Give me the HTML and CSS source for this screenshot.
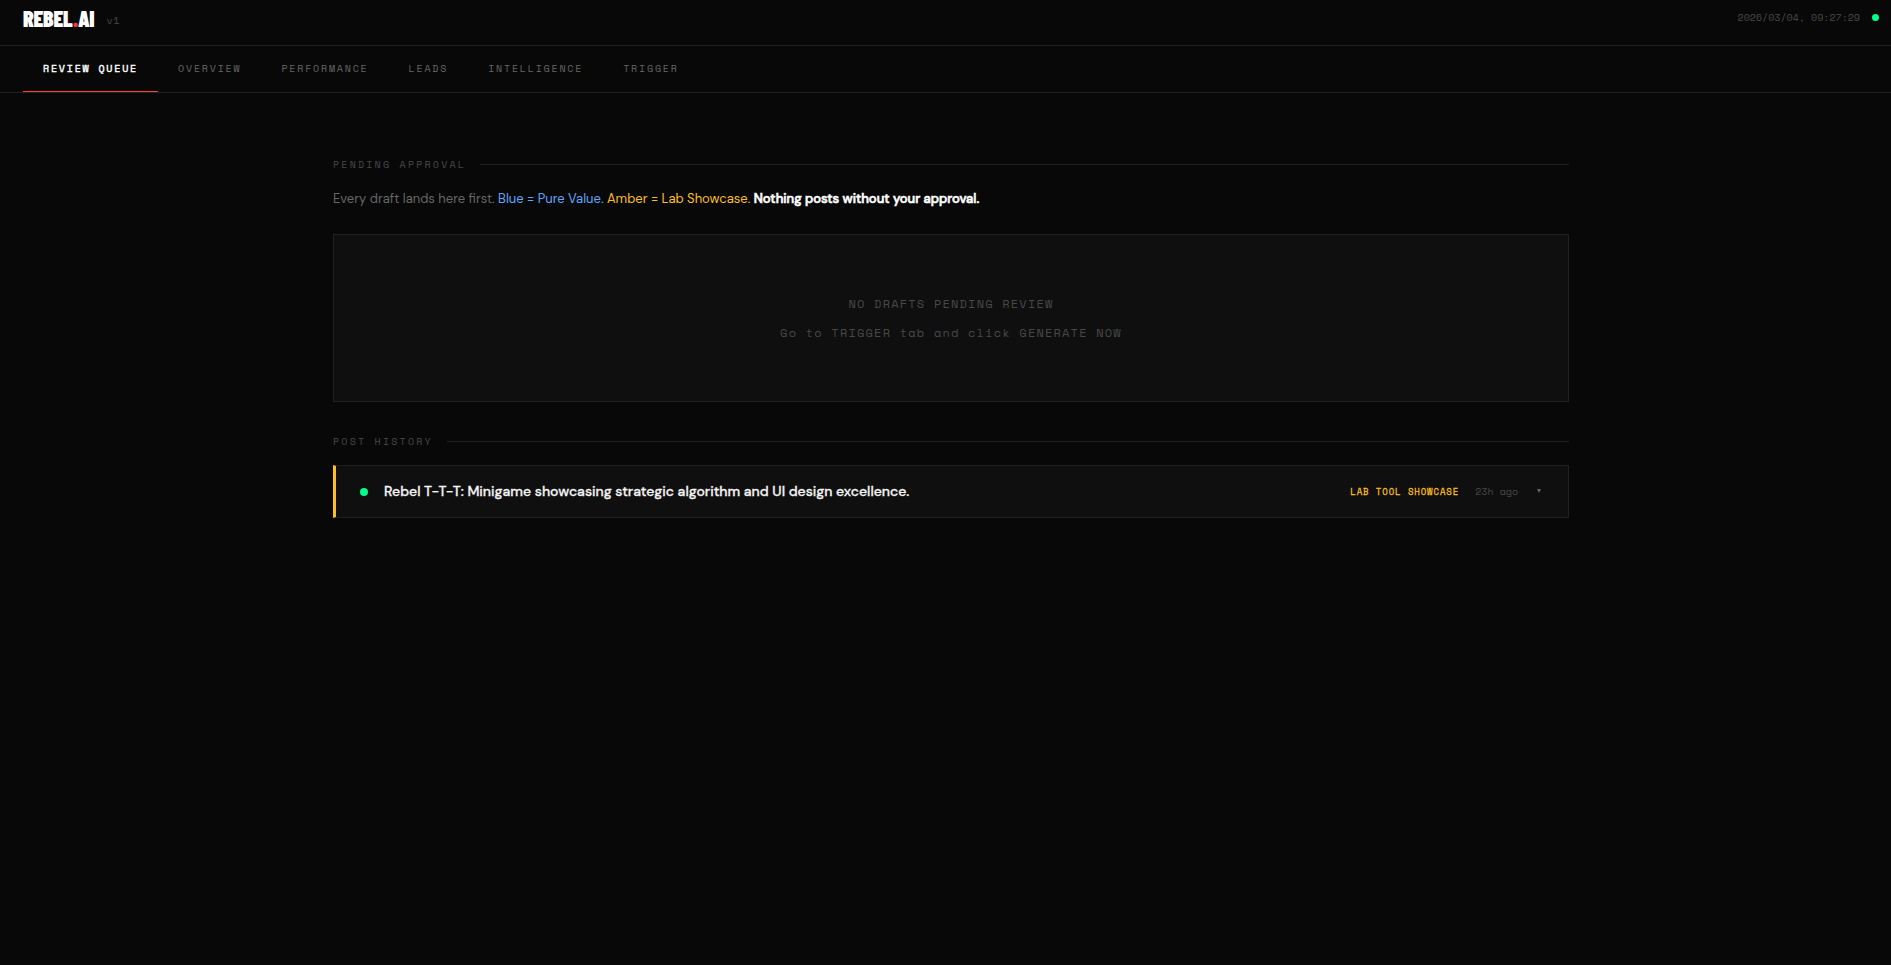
FILE: index.html
```html
<!DOCTYPE html>
<html lang="en">
<head>
  <meta charset="UTF-8" />
  <meta name="viewport" content="width=device-width, initial-scale=1.0" />
  <title>REBEL.AI</title>
  <link rel="stylesheet" href="styles.css">
</head>
<body>

  <header class="topbar">
    <div class="brand">
      <span class="logo">REBEL<span class="logo-dot">.</span>AI</span>
      <span class="version">v1</span>
    </div>
    <div class="status">
      <span class="clock">2026/03/04, 09:27:29</span>
      <span class="live-dot"></span>
    </div>
  </header>

  <nav class="tabs">
    <button class="tab active">REVIEW QUEUE</button>
    <button class="tab">OVERVIEW</button>
    <button class="tab">PERFORMANCE</button>
    <button class="tab">LEADS</button>
    <button class="tab">INTELLIGENCE</button>
    <button class="tab">TRIGGER</button>
  </nav>

  <div class="page">
    <main class="content">
      <h2 class="section-label">PENDING APPROVAL</h2>
      <p class="intro">Every draft lands here first. <span class="blue">Blue = Pure Value.</span> <span class="amber">Amber = Lab Showcase.</span> <strong>Nothing posts without your approval.</strong></p>

      <div class="empty">
        NO DRAFTS PENDING REVIEW<br>
        Go to TRIGGER tab and click GENERATE NOW
      </div>

      <h2 class="section-label">POST HISTORY</h2>
      <button class="post">
        <span class="post-dot"></span>
        <span class="post-title">Rebel T-T-T: Minigame showcasing strategic algorithm and UI design excellence.</span>
        <span class="post-tag">LAB TOOL SHOWCASE</span>
        <span class="post-age">23h ago</span>
        <svg class="post-arrow" viewBox="0 0 10 6" aria-hidden="true"><path d="M3 0h4L5 4z" /></svg>
      </button>
    </main>
  </div>

</body>
</html>
```
FILE: styles.css
```css
:root {
  --bg: #080808;
  --surface: #0f0f0f;
  --border: #202020;
  --text: #f5f5f5;
  --muted: #666;
  --dim: #484848;
  --red: #ff3b3b;
  --green: #00ff88;
  --amber: #fbbf24;
  --blue: #60a5fa;
  --mono: 'Space Mono', 'DejaVu Sans Mono', monospace;
  --sans: 'DM Sans', 'Inter', sans-serif;
}

* {
  box-sizing: border-box;
}

body {
  margin: 0;
  background: var(--bg);
  color: var(--text);
  font-family: var(--sans);
}

button {
  background: none;
  border: none;
  color: inherit;
  cursor: pointer;
}

/* header */
.topbar {
  display: flex;
  justify-content: space-between;
  align-items: flex-start;
  height: 46px;
  padding: 7px 12px 0 23px;
  border-bottom: 1px solid var(--border);
}

.brand {
  display: flex;
  align-items: center;
  gap: 12px;
}

.logo {
  padding-bottom: 2px;
  font-family: 'Barlow Condensed', 'Liberation Sans', sans-serif;
  font-size: 22px;
  font-weight: 900;
  line-height: 22px;
  letter-spacing: -0.01em;
  color: #fff;
}

.logo-dot {
  color: var(--red);
}

.version,
.clock {
  font-family: var(--mono);
  font-size: 10px;
  line-height: 21px;
  color: var(--dim);
}

.version {
  padding-top: 2px;
  letter-spacing: 0.1em;
}

.status {
  display: flex;
  align-items: center;
  gap: 12px;
}

.live-dot {
  width: 7px;
  height: 7px;
  border-radius: 50%;
  background: var(--green);
}

/* tabs */
.tabs {
  display: flex;
  padding: 0 23px;
  border-bottom: 1px solid var(--border);
}

.tab {
  height: 46px;
  padding: 0 20px;
  border-bottom: 1px solid transparent;
  font-family: var(--mono);
  font-size: 10px;
  letter-spacing: 0.18em;
  color: var(--muted);
}

.tab.active {
  color: #fff;
  -webkit-text-stroke: 0.04em;
  border-bottom-color: var(--red);
}

/* content */
.page {
  padding: 64px 0 64px 11px;
}

.content {
  max-width: 1236px;
  margin: 0 auto;
}

.section-label {
  display: flex;
  align-items: center;
  gap: 14px;
  margin: 0;
  font-family: var(--mono);
  font-size: 10px;
  font-weight: 400;
  line-height: 15px;
  letter-spacing: 0.22em;
  color: var(--dim);
}

.section-label::after {
  content: '';
  flex: 1;
  height: 1px;
  background: var(--border);
}

.intro {
  margin: 16px 0 24px;
  font-size: 13px;
  line-height: 22px;
  color: var(--muted);
}

.intro strong {
  color: #fff;
  font-weight: 500;
  -webkit-text-stroke: 0.05em;
}

.blue {
  color: var(--blue);
}

.amber {
  color: var(--amber);
}

.empty {
  margin-bottom: 32px;
  padding: 54px 24px;
  border: 1px solid var(--border);
  background: var(--surface);
  font-family: var(--mono);
  font-size: 12px;
  line-height: 29px;
  letter-spacing: 0.1em;
  text-align: center;
  color: var(--dim);
}

.post {
  display: flex;
  align-items: center;
  gap: 16px;
  width: 100%;
  margin-top: 16px;
  padding: 15px 24px;
  border: 1px solid var(--border);
  border-left: 3px solid var(--amber);
  background: var(--surface);
  text-align: left;
}

.post-dot {
  width: 8px;
  height: 8px;
  border-radius: 50%;
  background: var(--green);
}

.post-title {
  flex: 1;
  font-family: var(--sans);
  font-size: 14px;
  font-weight: 500;
  line-height: 21px;
  -webkit-text-stroke: 0.02em;
}

.post-tag {
  font-family: var(--mono);
  font-size: 9px;
  letter-spacing: 0.1em;
  color: var(--amber);
  -webkit-text-stroke: 0.03em;
}

.post-age {
  font-family: var(--mono);
  font-size: 10px;
  color: var(--dim);
}

.post-arrow {
  width: 10px;
  height: 6px;
  fill: var(--muted);
}
```
